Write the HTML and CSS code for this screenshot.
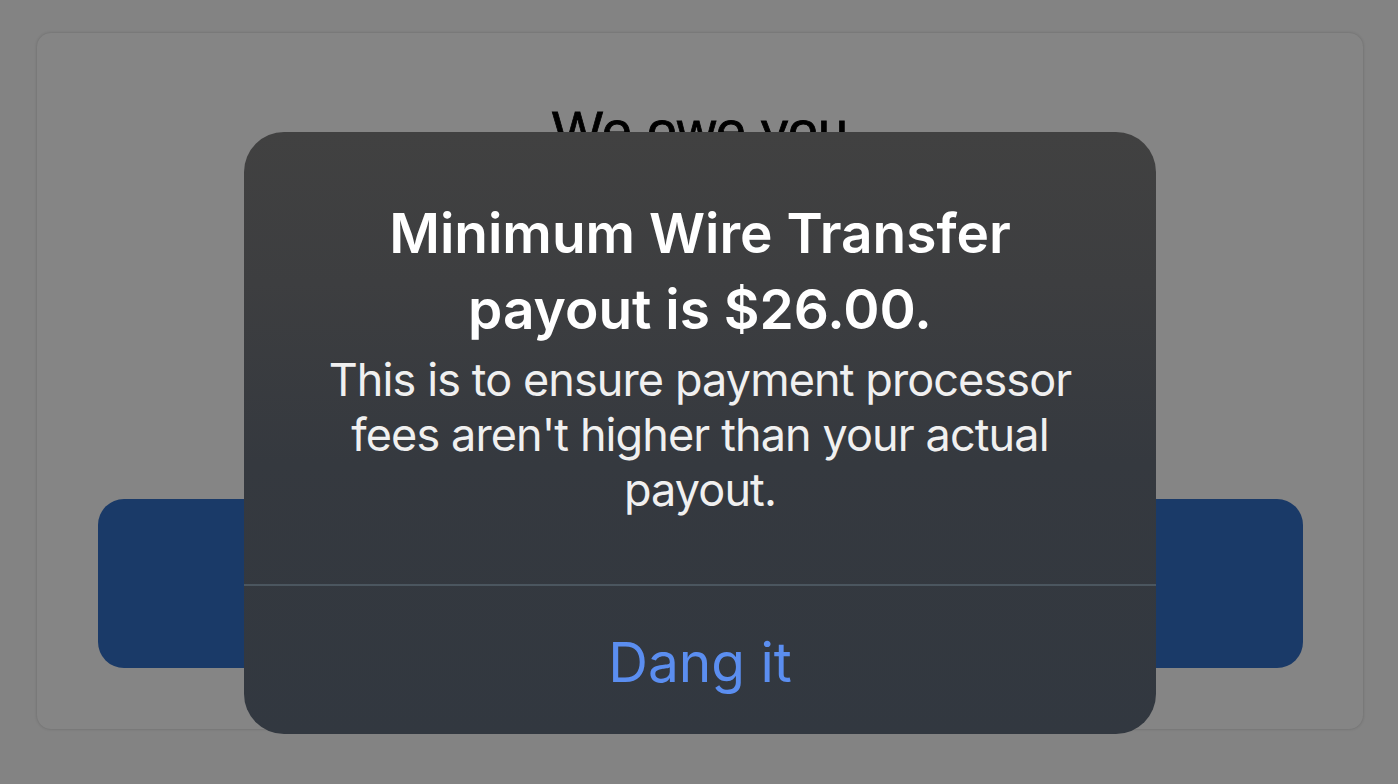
FILE: index.html
```html
<!DOCTYPE html>
<html lang="en">
<head>
<meta charset="utf-8">
<title>Minimum payout</title>
<link rel="stylesheet" href="styles.css">
</head>
<body>
<div class="screen">
  <div class="card">
    <h1 class="owe">We owe you</h1>
    <div class="spacer"></div>
    <button class="payout-btn" type="button"></button>
  </div>
  <div class="alert" role="alertdialog">
    <div class="alert-body">
      <h2 class="alert-title">Minimum Wire Transfer<br>payout is $26.00.</h2>
      <p class="alert-msg">This is to ensure payment processor<br>fees aren't higher than your actual<br>payout.</p>
    </div>
    <div class="alert-divider"></div>
    <button class="alert-action" type="button">Dang it</button>
  </div>
</div>
</body>
</html>
```

FILE: styles.css
```css
* { box-sizing: border-box; }
html, body {
  margin: 0;
  padding: 0;
  width: 1398px;
  height: 784px;
  overflow: hidden;
  background: #838383;
}
.screen {
  position: relative;
  width: 1398px;
  height: 784px;
  padding: 33px 35px 0 37px;
}
.card {
  width: 1326px;
  height: 696px;
  background: #858585;
  border-radius: 14px;
  box-shadow: 0 0 3px rgba(0,0,0,0.2);
  padding: 66px 60px 61px 60px;
  display: flex;
  flex-direction: column;
  align-items: center;
}
.owe {
  margin: 0;
  font-family: "Liberation Sans", Arial, sans-serif;
  font-weight: 400;
  font-size: 54px;
  line-height: 62px;
  color: #000;
  -webkit-text-stroke: 0.8px #000;
}
.spacer { flex: 1; }
.payout-btn {
  width: 1205px;
  height: 169px;
  border: none;
  border-radius: 26px;
  background: #1a3a68;
}
.alert {
  position: absolute;
  left: 244px;
  top: 132px;
  width: 912px;
  height: 602px;
  border-radius: 40px;
  background: linear-gradient(180deg, #414141 0%, #3d3e40 25%, #35393f 55%, #323840 100%);
  display: flex;
  flex-direction: column;
  overflow: hidden;
  font-family: Inter, "Noto Sans", sans-serif;
  color: #fff;
  text-align: center;
}
.alert-body {
  padding-top: 63px;
  height: 452px;
}
.alert-title {
  margin: 0;
  font-size: 55px;
  font-weight: 600;
  line-height: 76px;
  letter-spacing: 0;
}
.alert-msg {
  margin: 5px 0 0 0;
  font-size: 45px;
  font-weight: 400;
  line-height: 55px;
  letter-spacing: -0.9px;
  color: #f0f0f0;
}
.alert-divider {
  height: 2px;
  background: #4b565f;
}
.alert-action {
  flex: 1;
  border: none;
  background: transparent;
  font-family: Inter, "Noto Sans", sans-serif;
  font-size: 55px;
  font-weight: 400;
  color: #5b8ef0;
  padding: 4px 0 0 0;
}
```
